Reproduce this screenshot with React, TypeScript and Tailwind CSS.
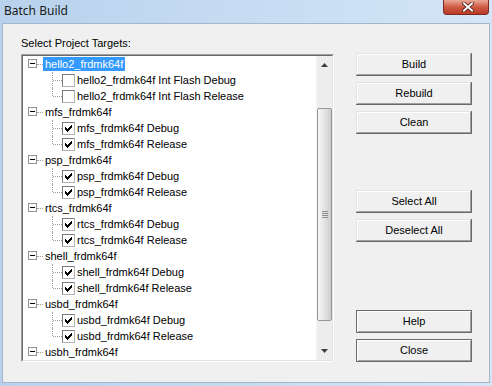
type Target = { name: string; checked: boolean };
type Project = { name: string; selected?: boolean; targets: Target[] };

const both = (p: string): Target[] => [
  { name: `${p} Debug`, checked: true },
  { name: `${p} Release`, checked: true },
];

const PROJECTS: Project[] = [
  {
    name: "hello2_frdmk64f",
    selected: true,
    targets: [
      { name: "hello2_frdmk64f Int Flash Debug", checked: false },
      { name: "hello2_frdmk64f Int Flash Release", checked: false },
    ],
  },
  { name: "mfs_frdmk64f", targets: both("mfs_frdmk64f") },
  { name: "psp_frdmk64f", targets: both("psp_frdmk64f") },
  { name: "rtcs_frdmk64f", targets: both("rtcs_frdmk64f") },
  { name: "shell_frdmk64f", targets: both("shell_frdmk64f") },
  { name: "usbd_frdmk64f", targets: both("usbd_frdmk64f") },
  { name: "usbh_frdmk64f", targets: both("usbh_frdmk64f") },
];

const UI_FONT = "font-['Liberation_Sans',Arial,sans-serif]";

function ExpandBox() {
  return (
    <div className="ml-[5px] mt-[3px] flex h-[9px] w-[9px] shrink-0 items-center justify-center border border-[#919191] bg-white">
      <div className="h-px w-[5px] bg-black" />
    </div>
  );
}

// classic pixel check mark, 7x7
const CHECK_COLS = [2, 3, 4, 3, 2, 1, 0];

function CheckBox({ checked }: { checked: boolean }) {
  return (
    <div className="relative h-[13px] w-[13px] shrink-0 border border-t-[#7a7a7a] border-l-[#7a7a7a] border-r-[#b4b4b4] border-b-[#b4b4b4] bg-white">
      {checked && (
        <svg width="7" height="7" viewBox="0 0 7 7" className="absolute left-[2px] top-[2px]" shapeRendering="crispEdges">
          {CHECK_COLS.map((y, x) => (
            <rect key={x} x={x} y={y} width="1" height="3" fill="#000" />
          ))}
        </svg>
      )}
    </div>
  );
}

function ProjectRows({ p }: { p: Project }) {
  return (
    <>
      <div className="flex h-4 items-start">
        <ExpandBox />
        <div className="mt-[8px] w-[6px] border-t border-dotted border-[#a0a0a0]" />
        <span
          className={`mt-px h-[14px] px-[2px] text-[11px] leading-[14px] whitespace-nowrap ${
            p.selected ? "bg-[#3399ff] text-white" : "text-black"
          }`}
        >
          {p.name}
        </span>
      </div>
      {p.targets.map((t, i) => {
        const last = i === p.targets.length - 1;
        return (
          <div key={t.name} className="relative flex h-4 items-center">
            <div
              className={`absolute left-[29px] top-0 border-l border-dotted border-[#a0a0a0] ${
                last ? "h-[8px]" : "h-4"
              }`}
            />
            <div className="ml-[30px] w-[9px] border-t border-dotted border-[#a0a0a0]" />
            <CheckBox checked={t.checked} />
            <span className="ml-[2px] text-[11px] leading-[14px] whitespace-nowrap text-black">{t.name}</span>
          </div>
        );
      })}
    </>
  );
}

function Scrollbar() {
  return (
    <div className="flex w-4 shrink-0 flex-col border-l border-[#f6f6f6] bg-[#ededed]">
      <div className="flex h-[17px] items-center justify-center pt-px">
        <svg width="7" height="4" viewBox="0 0 7 4">
          <path d="M3.5 0 L7 4 L0 4 Z" fill="#3c3c3c" />
        </svg>
      </div>
      <div className="h-[35px]" />
      <div className="flex h-[213px] items-center justify-center rounded-[2px] border border-[#979797] bg-linear-to-r from-[#f6f6f6] via-[#e4e4e4] to-[#cdcdcd]">
        <div className="flex flex-col gap-px">
          <div className="h-px w-[6px] bg-[#8d8d8d]" />
          <div className="h-px w-[6px] bg-[#8d8d8d]" />
          <div className="h-px w-[6px] bg-[#8d8d8d]" />
          <div className="h-px w-[6px] bg-[#8d8d8d]" />
        </div>
      </div>
      <div className="flex-1" />
      <div className="flex h-[17px] items-center justify-center pb-px">
        <svg width="7" height="4" viewBox="0 0 7 4">
          <path d="M0 0 L7 0 L3.5 4 Z" fill="#3c3c3c" />
        </svg>
      </div>
    </div>
  );
}

function Button({ label, framed, className = "" }: { label: string; framed?: boolean; className?: string }) {
  return (
    <button
      className={`flex h-[23px] w-[116px] items-center justify-center bg-[#f0f0f0] text-[11px] text-black ${
        framed
          ? "border border-[#6b6b6b] shadow-[inset_1px_1px_#ffffff,inset_-1px_-1px_#a0a0a0]"
          : "shadow-[inset_-1px_-1px_#696969,inset_1px_1px_#e3e3e3,inset_-2px_-2px_#a0a0a0,inset_2px_2px_#ffffff]"
      } ${className}`}
    >
      {label}
    </button>
  );
}

export default function App() {
  return (
    <div className={`flex h-[386px] w-[492px] flex-col overflow-hidden bg-linear-to-r from-[#b8d2ed] to-[#d4e6f8] ${UI_FONT}`}>
      {/* title bar */}
      <div className="flex h-[23px] shrink-0 items-start">
        <span className="ml-[4px] mt-[3px] font-['Noto_Sans',sans-serif] text-[12px] leading-[15px] text-[#1b1b1b]">
          Batch Build
        </span>
        <div className="mr-[3px] ml-auto flex h-[15px] w-[46px] items-center justify-center rounded-b-[4px] border border-t-0 border-[#7d2a1f] bg-linear-to-b from-[#e9a899] via-[#cf5a44] to-[#b83a27] pl-[4px]">
          <svg width="12" height="10" viewBox="0 0 12 10">
            <path d="M2 1.5 L10 8.5 M10 1.5 L2 8.5" stroke="#4a1a12" strokeWidth="3.6" strokeLinecap="square" />
            <path d="M2 1.5 L10 8.5 M10 1.5 L2 8.5" stroke="#ffffff" strokeWidth="2" strokeLinecap="square" />
          </svg>
        </div>
      </div>

      {/* client area */}
      <div className="mx-[2px] flex h-[360px] shrink-0 border border-[#a6b6c9] bg-[#f0f0f0]">
        <div className="flex flex-col pl-[18px] pt-[12px]">
          <span className="h-[14px] text-[11px] leading-[14px] text-black">Select Project Targets:</span>
          <div className="mt-[4px] h-[308px] w-[313px] border border-t-[#a0a0a0] border-l-[#a0a0a0] border-r-white border-b-white">
            <div className="flex h-full border border-t-[#696969] border-l-[#696969] border-r-[#e3e3e3] border-b-[#e3e3e3] bg-white">
              <div className="flex-1 overflow-hidden">
                {PROJECTS.map((p) => (
                  <ProjectRows key={p.name} p={p} />
                ))}
              </div>
              <Scrollbar />
            </div>
          </div>
        </div>

        <div className="ml-[22px] flex flex-col pt-[29px]">
          <Button label="Build" />
          <Button label="Rebuild" className="mt-[6px]" />
          <Button label="Clean" className="mt-[6px]" />
          <Button label="Select All" className="mt-[56px]" />
          <Button label="Deselect All" className="mt-[6px]" />
          <Button label="Help" framed className="mt-[68px]" />
          <Button label="Close" framed className="mt-[6px]" />
        </div>
      </div>
    </div>
  );
}
